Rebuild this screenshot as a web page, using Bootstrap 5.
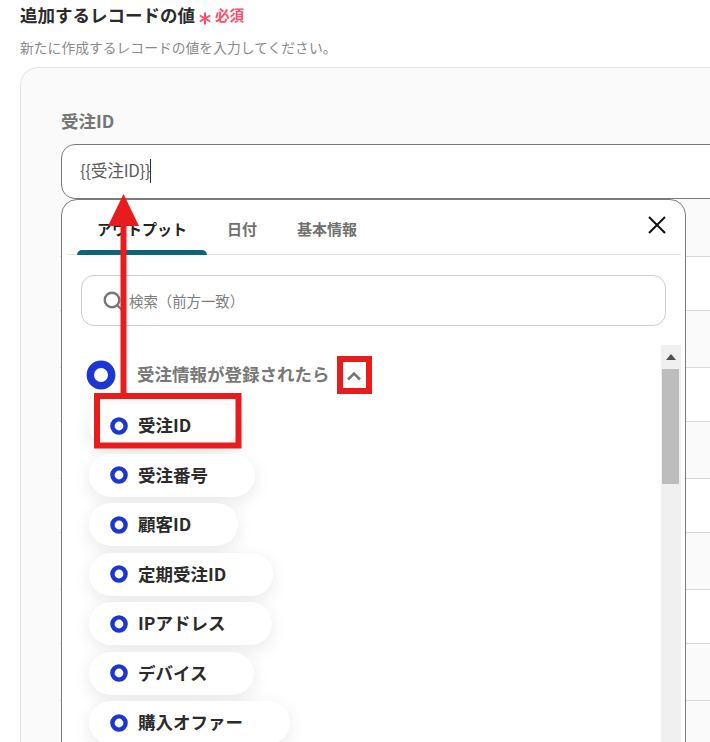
<!DOCTYPE html>
<html lang="ja">
<head>
<meta charset="utf-8">
<title>追加するレコードの値</title>
<link href="https://cdn.jsdelivr.net/npm/bootstrap@5.3.0/dist/css/bootstrap.min.css" rel="stylesheet">
<style>
html,body{margin:0;background:#fff;overflow:hidden}
body{font-family:"Noto Sans CJK JP","Noto Sans",sans-serif;color:#333}
.stage{position:relative;width:710px;height:742px;overflow:hidden;padding:3px 0 0 20px}
.head-title{font-size:17.5px;font-weight:700;line-height:24px;color:#2b2b2b;margin:0}
.req-mark{margin-left:4px;margin-top:6px}
.req-text{color:#ff4d6a;font-size:14.6px;font-weight:700;margin-left:4px;margin-top:-1px}
.head-sub{font-size:13.8px;line-height:20px;color:#8a8a8a;margin:10px 0 10px}
.panel-box{width:800px;height:760px;background:#fafafa;border:1px solid #e1e3e8;border-radius:18px;padding:41px 0 0 40px}
.field-label{font-size:17.5px;font-weight:700;color:#767676;line-height:24px;margin-bottom:11px}
.field-value{height:55px;width:760px;background:#fff;border:1.5px solid #7a7a7a;border-radius:14px;padding:0 18px 2px;font-size:16.8px;letter-spacing:-.3px;color:#5c5c5c;margin-bottom:1px}
.caret-bar{display:inline-block;width:1px;height:24px;background:#333}
.bg-row{margin-left:-1px;border-bottom:1.5px solid #d6d8de}
.bg-row.tall{height:57px;background:#fafafa}
.bg-row.short{height:54px;background:#fff}
.drop-menu{position:absolute;left:61px;top:199px;width:625px;height:600px;background:#fff;border:1.5px solid #7c7c7c;border-radius:16px 16px 0 0;padding:0 4px 0 5px}
.tab-row{height:55px;border-bottom:1.5px solid #e4e4e4;padding-left:10px}
.tab-item{position:relative;padding:0 20px;font-size:15px;font-weight:700;color:#6f6f6f;line-height:58px;height:55px}
.tab-item.on{color:#222}
.tab-item.on::after{content:"";position:absolute;left:0;right:0;bottom:0;height:5px;background:#0e6478;border-radius:5px 5px 0 0}
.close-x{margin-left:auto;margin-right:14px;margin-top:-4px}
.find-box{height:51px;margin:20px 15px 0 14px;border:1.5px solid #cdcdcd;border-radius:13px;padding-left:21px;font-size:14.4px;color:#7d7d7d;gap:6px}
.scroll-area{margin-top:19px}
.list-col{flex:1 1 auto;padding-left:22px}
.group-row{height:59px;margin-left:-3px}
.group-name{font-size:17.5px;font-weight:700;color:#787878;margin-left:21px}
.chev{margin-left:16px;margin-top:3px}
.leaf{width:max-content;height:43px;background:#fff;border-radius:22px;padding:0 47px 0 21px;margin-bottom:6.5px;box-shadow:0 5px 18px rgba(0,0,0,.09);font-size:17.5px;font-weight:600;color:#2b2b2b;gap:10px}
.sbar{width:20px;flex:0 0 20px;height:400px;background:#f0f0f0;padding:0 2px 0 1px}
.sbar-up{height:24px}
.sbar-thumb{height:115px;background:#bdbdbd}
.notes{position:absolute;left:0;top:0;pointer-events:none}
</style>
</head>
<body>
<div class="stage">
  <h1 class="head-title d-flex align-items-center">追加するレコードの値<svg class="req-mark" width="12" height="13" viewBox="0 0 12 13" aria-hidden="true"><path d="M6 .5V12.5M.8 3.5L11.2 9.5M11.2 3.5L.8 9.5" stroke="#ff4d6a" stroke-width="2" fill="none"/></svg><span class="req-text">必須</span></h1>
  <p class="head-sub">新たに作成するレコードの値を入力してください。</p>
  <div class="panel-box">
    <div class="field-label">受注ID</div>
    <div class="field-value d-flex align-items-center">{{受注ID}}<span class="caret-bar"></span></div>
    <div class="bg-row tall"></div>
    <div class="bg-row short"></div>
    <div class="bg-row tall"></div>
    <div class="bg-row short"></div>
    <div class="bg-row tall"></div>
    <div class="bg-row short"></div>
    <div class="bg-row tall"></div>
    <div class="bg-row short"></div>
    <div class="bg-row tall"></div>
  </div>

  <div class="drop-menu">
    <div class="tab-row d-flex align-items-center">
      <div class="tab-item on">アウトプット</div>
      <div class="tab-item">日付</div>
      <div class="tab-item">基本情報</div>
      <svg class="close-x" width="20" height="20" viewBox="0 0 20 20" aria-hidden="true"><path d="M2 2L18 18M18 2L2 18" stroke="#111" stroke-width="2" fill="none"/></svg>
    </div>
    <div class="find-box d-flex align-items-center">
      <svg width="20" height="20" viewBox="0 0 20 20" aria-hidden="true"><circle cx="9" cy="9" r="7.3" stroke="#777" stroke-width="2.4" fill="none"/><path d="M14.5 14.5L19 19" stroke="#777" stroke-width="2.4"/></svg>
      <span>検索（前方一致）</span>
    </div>
    <div class="scroll-area d-flex">
      <div class="list-col">
        <div class="group-row d-flex align-items-center">
          <svg width="30" height="30" viewBox="0 0 30 30" aria-hidden="true"><circle cx="15" cy="15" r="10.7" stroke="#1b36d2" stroke-width="7.4" fill="#fff"/></svg>
          <span class="group-name">受注情報が登録されたら</span>
          <svg class="chev" width="16" height="10" viewBox="0 0 16 10" aria-hidden="true"><path d="M2 8.5L8 2.5L14 8.5" stroke="#777" stroke-width="2.6" fill="none"/></svg>
        </div>
        <div class="leaf d-flex align-items-center"><svg width="18" height="18" viewBox="0 0 18 18" aria-hidden="true"><circle cx="9" cy="9" r="6.6" stroke="#1b36d2" stroke-width="4.4" fill="#fff"/></svg><span>受注ID</span></div>
        <div class="leaf d-flex align-items-center"><svg width="18" height="18" viewBox="0 0 18 18" aria-hidden="true"><circle cx="9" cy="9" r="6.6" stroke="#1b36d2" stroke-width="4.4" fill="#fff"/></svg><span>受注番号</span></div>
        <div class="leaf d-flex align-items-center"><svg width="18" height="18" viewBox="0 0 18 18" aria-hidden="true"><circle cx="9" cy="9" r="6.6" stroke="#1b36d2" stroke-width="4.4" fill="#fff"/></svg><span>顧客ID</span></div>
        <div class="leaf d-flex align-items-center"><svg width="18" height="18" viewBox="0 0 18 18" aria-hidden="true"><circle cx="9" cy="9" r="6.6" stroke="#1b36d2" stroke-width="4.4" fill="#fff"/></svg><span>定期受注ID</span></div>
        <div class="leaf d-flex align-items-center"><svg width="18" height="18" viewBox="0 0 18 18" aria-hidden="true"><circle cx="9" cy="9" r="6.6" stroke="#1b36d2" stroke-width="4.4" fill="#fff"/></svg><span>IPアドレス</span></div>
        <div class="leaf d-flex align-items-center"><svg width="18" height="18" viewBox="0 0 18 18" aria-hidden="true"><circle cx="9" cy="9" r="6.6" stroke="#1b36d2" stroke-width="4.4" fill="#fff"/></svg><span>デバイス</span></div>
        <div class="leaf d-flex align-items-center"><svg width="18" height="18" viewBox="0 0 18 18" aria-hidden="true"><circle cx="9" cy="9" r="6.6" stroke="#1b36d2" stroke-width="4.4" fill="#fff"/></svg><span>購入オファー</span></div>
      </div>
      <div class="sbar">
        <div class="sbar-up d-flex align-items-center justify-content-center"><svg width="10" height="6" viewBox="0 0 10 6" aria-hidden="true"><path d="M5 0L10 6H0Z" fill="#505050"/></svg></div>
        <div class="sbar-thumb"></div>
      </div>
    </div>
  </div>

  <svg class="notes" width="710" height="742" viewBox="0 0 710 742" aria-hidden="true">
    <path d="M123.5 194L139 226H108Z" fill="#e81c1c"/>
    <rect x="120.5" y="225" width="6" height="170" fill="#e81c1c"/>
    <rect x="97" y="396" width="141.5" height="49.5" fill="none" stroke="#e81c1c" stroke-width="6"/>
    <rect x="340" y="359" width="29" height="32" fill="none" stroke="#e81c1c" stroke-width="6"/>
  </svg>
</div>
<script src="https://cdn.jsdelivr.net/npm/bootstrap@5.3.0/dist/js/bootstrap.bundle.min.js"></script>
</body>
</html>
